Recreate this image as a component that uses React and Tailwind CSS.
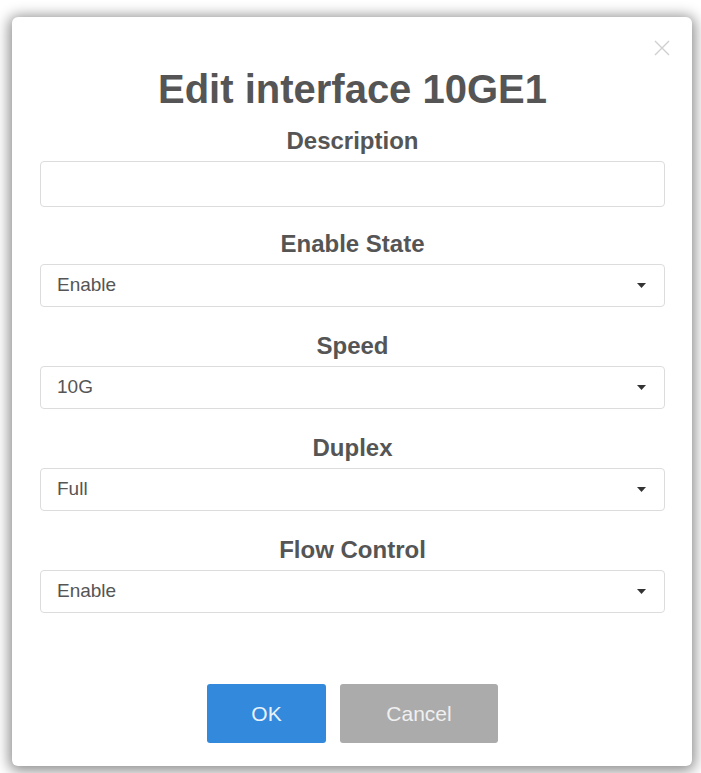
import { useState } from "react";

const fields = [
  { label: "Enable State", value: "Enable" },
  { label: "Speed", value: "10G" },
  { label: "Duplex", value: "Full" },
  { label: "Flow Control", value: "Enable" },
];

function Caret() {
  return (
    <svg width="9" height="5" viewBox="0 0 9 5" className="shrink-0">
      <path d="M0 0 L9 0 L4.5 5 Z" fill="#333" />
    </svg>
  );
}

export default function App() {
  const [desc, setDesc] = useState("");

  return (
    <div className="w-[701px] h-[773px] overflow-hidden bg-white pt-[17px] pl-[12px] font-['Liberation_Sans',Arial,sans-serif]">
      <div className="relative w-[680px] h-[749px] bg-white rounded-[6px] shadow-[0_2px_14px_3px_rgba(0,0,0,0.45)] pt-[50px] pl-[28px] pr-[27px]">
        {/* close */}
        <button className="absolute right-[22px] top-[23px] w-[16px] h-[16px]">
          <svg width="16" height="16" viewBox="0 0 16 16">
            <path d="M1 1 L15 15 M15 1 L1 15" stroke="#cfcfcf" strokeWidth="1.4" />
          </svg>
        </button>

        <h1 className="text-center text-[40px] leading-[44px] font-bold text-[#555] mb-[16px]">
          Edit interface 10GE1
        </h1>

        {/* Description */}
        <div className="text-center text-[24px] leading-[28px] font-bold text-[#555] mb-[6px]">
          Description
        </div>
        <input
          value={desc}
          onChange={(e) => setDesc(e.target.value)}
          className="block w-full h-[46px] border border-[#dcdcdc] rounded-[4px] mb-[23px] px-4 outline-none"
        />

        {fields.map((f) => (
          <div key={f.label} className="mb-[25px]">
            <div className="text-center text-[24px] leading-[28px] font-bold text-[#555] mb-[6px]">
              {f.label}
            </div>
            <div className="flex items-center justify-between h-[43px] border border-[#dcdcdc] rounded-[4px] pl-[16px] pr-[18px]">
              <span className="text-[19px] text-[#555]">{f.value}</span>
              <Caret />
            </div>
          </div>
        ))}

        {/* buttons */}
        <div className="flex justify-center gap-[14px] mt-[71px]">
          <button className="w-[119px] h-[59px] rounded-[3px] bg-[#3389db] text-[21px] text-[#e8f2fc]">
            OK
          </button>
          <button className="w-[158px] h-[59px] rounded-[3px] bg-[#ababab] text-[21px] text-[#f0f0f0]">
            Cancel
          </button>
        </div>
      </div>
    </div>
  );
}
